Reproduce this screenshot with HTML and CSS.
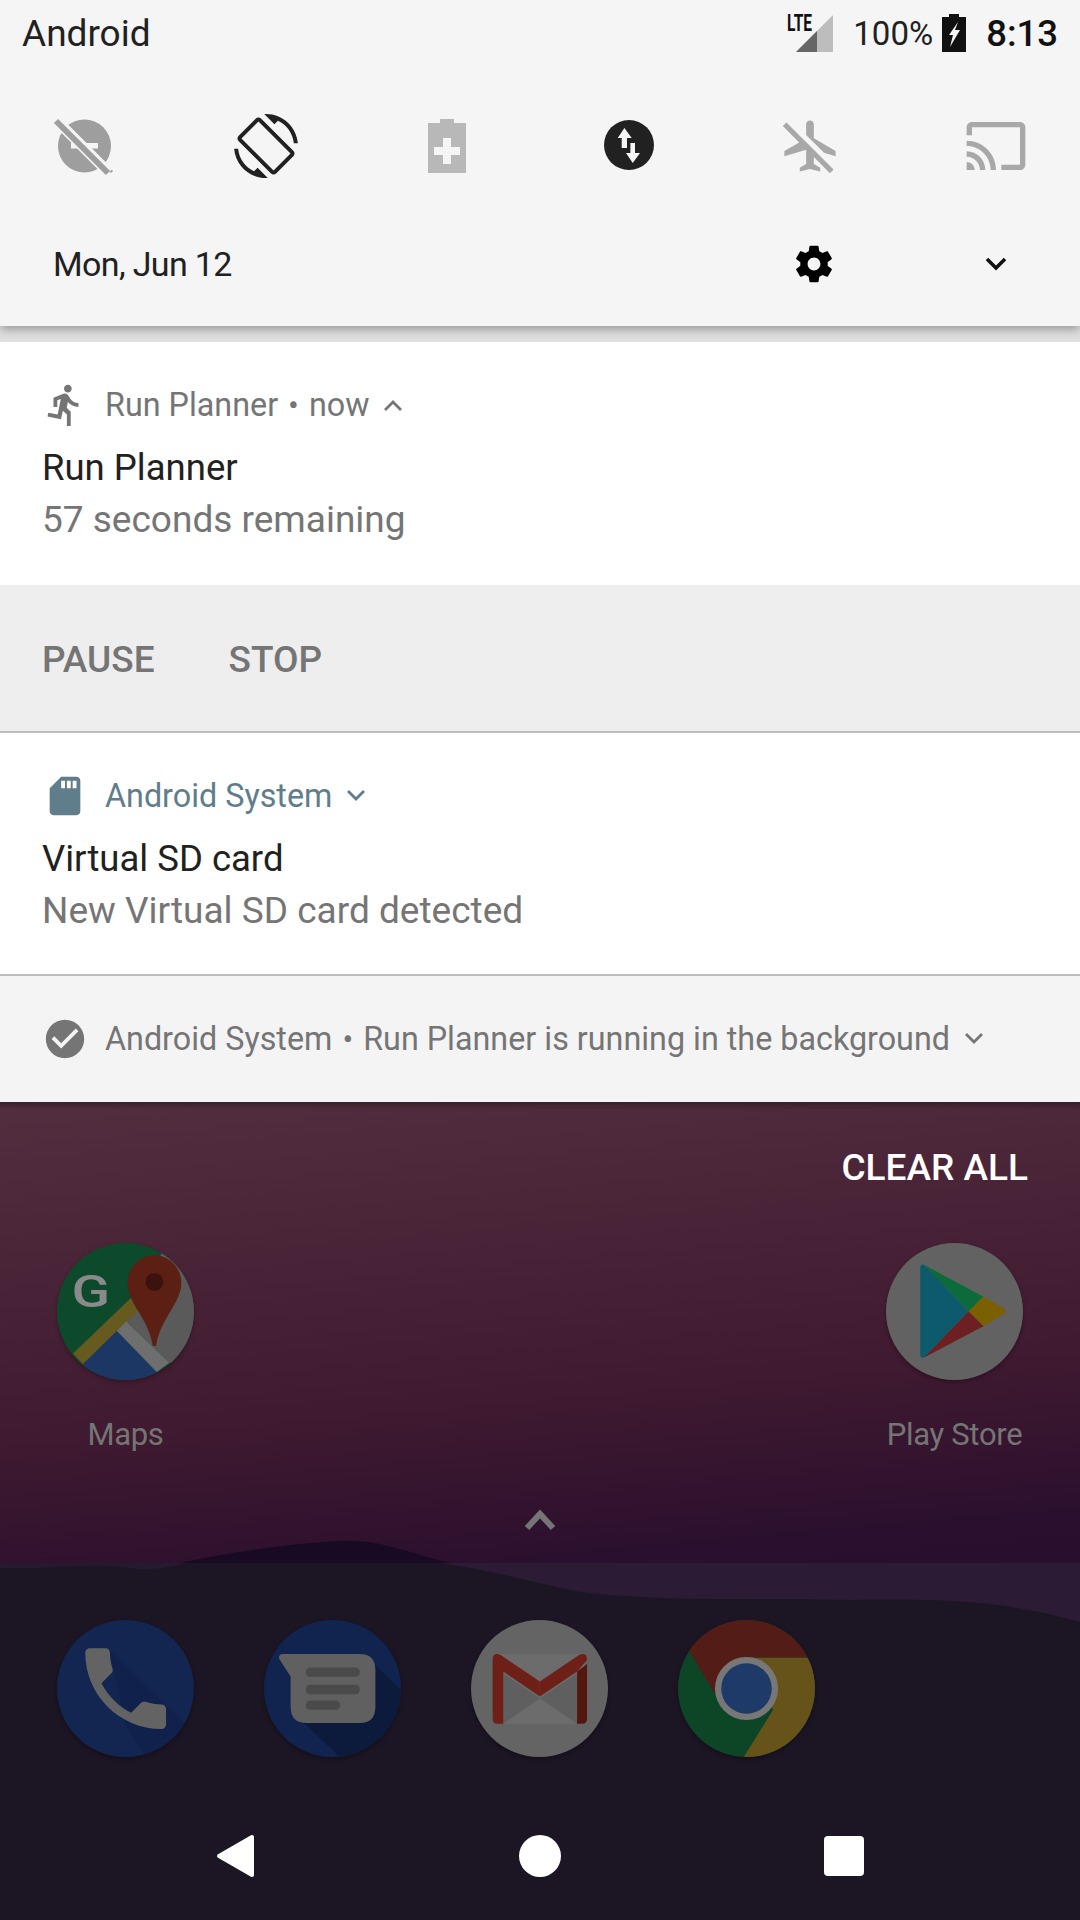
FILE: index.html
```html
<!DOCTYPE html>
<html lang="en">
<head>
    <meta charset="UTF-8">
    <meta name="viewport" content="width=device-width, initial-scale=1.0">
    <title>Notification shade</title>
    <link rel="stylesheet" href="styles.css">
</head>
<body>
    <header class="shade">
        <div class="status-bar">
            <span class="carrier">Android</span>
            <svg class="signal" viewBox="0 -4 50 48">
                <path fill="#bdbdbd" d="M49 2V39H12z"/>
                <path fill="#666" d="M12 39L33 18V39z"/>
                <text class="lte" x="3" y="18" textLength="25" lengthAdjust="spacingAndGlyphs">LTE</text>
            </svg>
            <span class="battery-text">100%</span>
            <svg class="battery" viewBox="0 0 24 38">
                <path fill="#111" d="M7 0H17V3H24V38H0V3H7z"/>
                <path fill="#f5f5f5" d="M16 8L7 21H11L8 33L18 16H13z"/>
            </svg>
            <span class="clock">8:13</span>
        </div>

        <div class="tiles">
            <svg class="tile" viewBox="0 0 64 64">
                <circle cx="32.500" cy="32" r="26.500" fill="#9e9e9e"/>
                <rect x="19" y="29" width="27" height="5.500" fill="#f5f5f5"/>
                <path d="M8 6L60 58" stroke="#9e9e9e" stroke-width="3"/>
                <path d="M7.500 4L59.500 56" stroke="#f5f5f5" stroke-width="3"/>
                <path d="M4 7L56 59" stroke="#f5f5f5" stroke-width="9"/>
                <path d="M4 7L56 59" stroke="#9e9e9e" stroke-width="6"/>
            </svg>
            <svg class="tile" viewBox="0 0 24 24">
                <path fill="#212121" d="M16.48 2.52c3.27 1.55 5.61 4.72 5.97 8.48h1.5C23.44 4.84 18.29 0 12 0l-.66.03 3.81 3.81 1.33-1.32zm-6.25-.77c-.59-.59-1.54-.59-2.12 0L1.75 8.11c-.59.59-.59 1.54 0 2.12l12.02 12.02c.59.59 1.54.59 2.12 0l6.36-6.36c.59-.59.59-1.54 0-2.12L10.23 1.75zm4.6 19.44L2.81 9.17l6.36-6.36 12.02 12.02-6.36 6.36zm-7.31.29C4.25 19.94 1.91 16.76 1.55 13H.05C.56 19.16 5.71 24 12 24l.66-.03-3.81-3.81-1.33 1.32z"/>
            </svg>
            <svg class="tile" viewBox="0 0 64 64">
                <path fill="#b8b8b8" d="M25 5H39V9H51V59H13V9H25z"/>
                <path fill="#f5f5f5" d="M28 24H36V33H45V41H36V50H28V41H19V33H28z"/>
            </svg>
            <svg class="tile" viewBox="0 0 64 64">
                <circle cx="32" cy="31" r="25" fill="#212121"/>
                <path fill="#f5f5f5" d="M27.400 14L34.700 24H30V34H24.700V24H20.700z"/>
                <path fill="#f5f5f5" d="M33.400 29H38V39H43L35.700 49L29 39H33.400z"/>
            </svg>
            <svg class="tile" viewBox="-0.500 -0.500 25 25">
                <path fill="#a8a8a8" d="M10.500 7.670V3.500c0-.83.67-1.500 1.500-1.500s1.500.67 1.500 1.500V9l8.500 5v2l-4.490-1.320-7.010-7.010zm9.280 14.940l1.410-1.410-7.690-7.700-3.940-3.940-6.750-6.750-1.420 1.410 6.380 6.380L2 14v2l8.500-2.500V19L8 20.500V22l4-1 4 1v-1.500L13.500 19v-2.670l6.280 6.280z"/>
            </svg>
            <svg class="tile" viewBox="0 0 24 24">
                <path fill="#a8a8a8" d="M21 3H3c-1.100 0-2 .9-2 2v3h2V5h18v14h-7v2h7c1.100 0 2-.9 2-2V5c0-1.100-.9-2-2-2zM1 18v3h3c0-1.660-1.340-3-3-3zm0-4v2c2.760 0 5 2.240 5 5h2c0-3.870-3.130-7-7-7zm0-4v2c4.970 0 9 4.030 9 9h2c0-6.080-4.930-11-11-11z"/>
            </svg>
        </div>

        <div class="date-row">
            <span class="date">Mon, Jun 12</span>
            <svg class="gear" viewBox="0 0 24 24">
                <path fill="#000" d="M19.430 12.980c.04-.32.07-.64.07-.98s-.03-.66-.07-.98l2.110-1.650c.19-.15.24-.42.12-.64l-2-3.460c-.12-.22-.39-.3-.61-.22l-2.490 1c-.52-.4-1.080-.73-1.690-.98l-.38-2.650C14.460 2.180 14.250 2 14 2h-4c-.25 0-.46.18-.49.42l-.38 2.650c-.61.25-1.170.59-1.690.98l-2.490-1c-.23-.09-.49 0-.61.22l-2 3.460c-.13.22-.07.49.12.64l2.110 1.650c-.04.32-.07.65-.07.98s.03.66.07.98l-2.110 1.650c-.19.15-.24.42-.12.64l2 3.460c.12.22.39.3.61.22l2.490-1c.52.4 1.080.73 1.690.98l.38 2.650c.03.24.24.42.49.42h4c.25 0 .46-.18.49-.42l.38-2.650c.61-.25 1.170-.59 1.690-.98l2.490 1c.23.09.49 0 .61-.22l2-3.460c.12-.22.07-.49-.12-.64l-2.110-1.650zM12 15.500c-1.930 0-3.500-1.570-3.500-3.500s1.570-3.500 3.500-3.500 3.500 1.570 3.500 3.500-1.570 3.500-3.500 3.500z"/>
            </svg>
            <svg class="expand" viewBox="0 0 24 16">
                <path d="M3 3L12 12L21 3" fill="none" stroke="#111" stroke-width="3.500"/>
            </svg>
        </div>
    </header>

    <main class="list">
        <section class="notif">
            <div class="notif-head">
                <svg class="notif-icon" viewBox="0 0 24 24">
                    <path fill="#757575" d="M13.490 5.480c1.100 0 2-.9 2-2s-.9-2-2-2-2 .9-2 2 .9 2 2 2zm-3.600 13.900l1-4.400 2.100 2v6h2v-7.500l-2.100-2 .6-3c1.300 1.500 3.300 2.500 5.500 2.500v-2c-1.900 0-3.500-1-4.300-2.400l-1-1.600c-.4-.6-1-1-1.700-1-.3 0-.5.1-.8.1l-5.200 2.200v4.700h2v-3.400l1.800-.7-1.600 8.100-4.900-1-.4 2 7 1.400z"/>
                </svg>
                <span>Run Planner</span>
                <span class="dot">•</span>
                <span>now</span>
                <svg class="chev" viewBox="0 0 20 14"><path d="M2 12L10 4L18 12" fill="none" stroke="currentColor" stroke-width="2.800"/></svg>
            </div>
            <div class="notif-title">Run Planner</div>
            <div class="notif-text">57 seconds remaining</div>
        </section>
        <div class="actions">
            <span class="action">PAUSE</span>
            <span class="action">STOP</span>
        </div>

        <section class="notif notif-last">
            <div class="notif-head system">
                <svg class="notif-icon" viewBox="0 0 24 24">
                    <path fill="#607d8b" d="M18 2h-8L4.020 8 4 20c0 1.100.9 2 2 2h12c1.100 0 2-.9 2-2V4c0-1.100-.9-2-2-2zm-6 6h-2V4h2v4zm3 0h-2V4h2v4zm3 0h-2V4h2v4z"/>
                </svg>
                <span>Android System</span>
                <svg class="chev" viewBox="0 0 20 14"><path d="M2 2L10 10L18 2" fill="none" stroke="currentColor" stroke-width="2.800"/></svg>
            </div>
            <div class="notif-title">Virtual SD card</div>
            <div class="notif-text">New Virtual SD card detected</div>
        </section>

        <section class="notif-min">
            <div class="notif-head">
                <svg class="notif-icon" viewBox="0 0 24 24">
                    <path fill="#757575" d="M12 2C6.480 2 2 6.480 2 12s4.480 10 10 10 10-4.480 10-10S17.520 2 12 2zm-2 15l-5-5 1.410-1.410L10 14.170l7.590-7.590L19 8l-9 9z"/>
                </svg>
                <span>Android System</span>
                <span class="dot">•</span>
                <span>Run Planner is running in the background</span>
                <svg class="chev" viewBox="0 0 20 14"><path d="M2 2L10 10L18 2" fill="none" stroke="currentColor" stroke-width="2.800"/></svg>
            </div>
        </section>
    </main>

    <div class="home">
        <svg class="wallpaper" viewBox="0 0 1080 818">
            <path fill="#170a22" d="M180 461C230 450 300 440 345 439C385 438 410 452 450 461z"/>
            <rect y="461" width="1080" height="357" fill="#1c1524"/>
            <path fill="#2b1b35" d="M440 461C500 470 530 480 580 490C660 500 760 496 850 498C950 496 1010 500 1080 520V461z"/>
            <path fill="#261a30" d="M0 466C50 468 90 460 130 466C150 470 170 464 190 461H0z"/>
        </svg>

        <div class="clear-row"><span class="clear-all">CLEAR ALL</span></div>

        <div class="apps">
            <div class="app">
                <svg class="app-icon" viewBox="172 130 412 412">
                    <rect x="172" y="130" width="412" height="412" fill="#0d4a2b"/>
                    <path fill="#5a5a5a" d="M410 335L500 130H600V490H510L380 365z"/>
                    <path fill="#665a1e" d="M395 295L415 335L250 495L220 462z"/>
                    <path fill="#1c3764" d="M352 395L472 518L400 560H300L250 495z"/>
                    <path fill="#6e6e6e" d="M380 365L510 490L472 518L352 395z"/>
                    <path fill="#5c1f13" d="M465 167C420 167 384 205 384 250C384 310 450 360 460 440H470C480 360 546 310 546 250C546 205 510 167 465 167z"/>
                    <circle cx="465" cy="247" r="27" fill="#3b120d"/>
                    <text class="maps-g" x="216" y="322" textLength="116" lengthAdjust="spacingAndGlyphs">G</text>
                </svg>
                <span class="app-label">Maps</span>
            </div>
            <div class="app">
                <svg class="app-icon" viewBox="137 130 412 412">
                    <rect x="137" y="130" width="412" height="412" fill="#626262"/>
                    <path fill="#0b6b3a" d="M250 195L430 292L385 335z"/>
                    <path fill="#7a6000" d="M430 292L490 326Q502 335 490 344L430 380L385 335z"/>
                    <path fill="#6e1f22" d="M385 335L430 380L250 475z"/>
                    <path fill="#0c5a6b" d="M240 205Q240 195 250 195L385 335L250 475Q240 475 240 465z"/>
                </svg>
                <span class="app-label">Play Store</span>
            </div>
        </div>

        <svg class="up-chev" viewBox="0 0 36 24"><path d="M5 21L18 7L31 21" fill="none" stroke="#757575" stroke-width="6"/></svg>

        <div class="dock">
            <svg class="app-icon" viewBox="172 420 412 412">
                <rect x="172" y="420" width="412" height="412" fill="#122651"/>
                <path fill="#10224b" d="M330 510L584 760V832H440L380 740z"/>
                <path fill="#636363" transform="translate(216.500 464.500) scale(13.500)" d="M6.620 10.790c1.440 2.830 3.760 5.140 6.590 6.590l2.200-2.200c.27-.27.67-.36 1.020-.24 1.120.37 2.330.57 3.570.57.55 0 1 .45 1 1V20c0 .55-.45 1-1 1-9.390 0-17-7.610-17-17 0-.55.45-1 1-1h3.500c.55 0 1 .45 1 1 0 1.250.2 2.450.57 3.570.11.35.03.74-.25 1.020l-2.200 2.200z"/>
            </svg>
            <svg class="app-icon" viewBox="792 420 412 412">
                <rect x="792" y="420" width="412" height="412" fill="#10244f"/>
                <path fill="#0c1b3c" d="M1100 530L1204 630V832H1020L880 700z"/>
                <path fill="#606060" d="M850 522H1080Q1127 522 1127 570V680Q1127 730 1080 730H920Q872 730 872 680V590L838 537Q834 522 850 522z"/>
                <rect x="918" y="563" width="162" height="28" rx="13" fill="#4a4a4a"/>
                <rect x="918" y="615" width="162" height="28" rx="13" fill="#4a4a4a"/>
                <rect x="918" y="662" width="103" height="28" rx="13" fill="#4a4a4a"/>
            </svg>
            <svg class="app-icon" viewBox="93 420 412 412">
                <rect x="93" y="420" width="412" height="412" fill="#646464"/>
                <rect x="165" y="522" width="270" height="210" fill="#6c6c6c"/>
                <path fill="#5f5f5f" d="M190 580L300 655L190 732zM412 580L300 655L412 732z"/>
                <path fill="#6e2018" d="M158 540Q158 515 182 525L300 605V650L190 575V732H172Q158 732 158 716z"/>
                <path fill="#6e2018" d="M442 540Q442 515 418 525L300 605V650L412 575z"/>
                <path fill="#541710" d="M412 575L442 552V716Q442 732 428 732H412z"/>
            </svg>
            <svg class="app-icon" viewBox="714 420 412 412">
                <rect x="714" y="420" width="412" height="412" fill="#0d4527"/>
                <path fill="#66531a" d="M920 533H1126V832H912L1000 690z"/>
                <path fill="#541c17" d="M748 515L714 420H1126V533H920L830 650z"/>
                <circle cx="920" cy="626" r="95" fill="#777"/>
                <circle cx="920" cy="626" r="76" fill="#1d3a68"/>
            </svg>
        </div>

        <nav class="nav-bar">
            <svg class="nav-btn" viewBox="0 0 60 60"><path fill="#fff" d="M13 30L46 11V49z" stroke="#fff" stroke-width="4" stroke-linejoin="round"/></svg>
            <span class="nav-home"></span>
            <span class="nav-recent"></span>
        </nav>
    </div>
</body>
</html>
```

FILE: styles.css
```css
* {
    box-sizing: border-box;
}

html, body {
    margin: 0;
    padding: 0;
}

body {
    width: 1080px;
    height: 1920px;
    overflow: hidden;
    display: flex;
    flex-direction: column;
    background-color: #e0e0e0;
    font-family: Roboto, sans-serif;
}

/* quick settings */
.shade {
    height: 326px;
    margin-bottom: 16px;
    background-color: #f5f5f5;
    box-shadow: 0 3px 10px rgba(0, 0, 0, 0.35);
    position: relative;
}

.status-bar {
    height: 66px;
    display: flex;
    align-items: center;
    padding: 0 22px 0 22px;
    color: #212121;
}

.carrier {
    font-size: 37px;
    margin-right: auto;
}

.signal {
    width: 50px;
    height: 48px;
    margin-right: 19px;
}

.lte {
    font-family: Roboto, sans-serif;
    font-weight: 700;
    font-size: 23px;
    fill: #111;
}

.battery-text {
    font-size: 33px;
    margin-right: 9px;
}

.battery {
    width: 24px;
    height: 38px;
    margin-right: 20px;
}

.clock {
    font-size: 36.500px;
    font-weight: 500;
    color: #111;
}

.tiles {
    height: 160px;
    padding: 0 52px;
    display: flex;
    gap: 117.600px;
    align-items: center;
}

.tile {
    width: 64px;
    height: 64px;
    flex-shrink: 0;
}

.tile:last-child {
    margin-left: auto;
}

.date-row {
    height: 76px;
    display: flex;
    align-items: center;
    padding-left: 53px;
}

.date {
    font-size: 34px;
    letter-spacing: -0.650px;
    color: #212121;
    margin-right: auto;
}

.gear {
    width: 44px;
    height: 44px;
    margin-right: 148px;
}

.expand {
    width: 24px;
    height: 16px;
    margin-right: 72px;
}

/* notifications */
.list {
    display: flex;
    flex-direction: column;
}

.notif {
    height: 243px;
    padding: 41px 0 0 42px;
    background-color: #fff;
}

.notif-last {
    height: 241px;
}

.notif-head {
    height: 44px;
    display: flex;
    align-items: center;
    gap: 10px;
    font-size: 32.300px;
    color: #757575;
    white-space: nowrap;
}

.notif-head.system {
    color: #607d8b;
}

.notif-icon {
    width: 46px;
    height: 46px;
    margin-right: 7px;
    flex-shrink: 0;
}

.dot {
    font-size: 32px;
}

.chev {
    width: 20px;
    height: 14px;
    margin-left: 4px;
}

.notif-title {
    margin-top: 16px;
    height: 50px;
    line-height: 50px;
    font-size: 36.500px;
    color: #212121;
}

.notif-text {
    height: 54px;
    line-height: 54px;
    font-size: 37px;
    color: #757575;
}

.actions {
    height: 148px;
    display: flex;
    align-items: center;
    gap: 74px;
    padding: 2px 0 0 42px;
    background-color: #eeeeee;
    border-bottom: 2px solid #bdbdbd;
}

.action {
    font-size: 37px;
    font-weight: 500;
    color: #757575;
}

.notif-min {
    height: 128px;
    padding: 41px 0 0 42px;
    background-color: #f4f4f4;
    border-top: 2px solid #bdbdbd;
}

/* home screen behind the shade */
.home {
    flex: 1;
    position: relative;
    background: linear-gradient(175deg, #532e3f 0%, #401a30 37%, #2a0f2e 56%, #1f0c28 100%);
}

.home::before {
    content: "";
    position: absolute;
    left: 0;
    right: 0;
    top: 0;
    height: 8px;
    background: linear-gradient(rgba(0, 0, 0, 0.3), rgba(0, 0, 0, 0));
}

.wallpaper {
    position: absolute;
    left: 0;
    top: 0;
    width: 1080px;
    height: 818px;
}

.clear-row, .apps, .up-chev, .dock, .nav-bar {
    position: relative;
}

.clear-row {
    height: 130px;
    display: flex;
    justify-content: flex-end;
    align-items: center;
    padding-right: 52px;
}

.clear-all {
    font-size: 37px;
    font-weight: 500;
    color: #fff;
}

.apps {
    margin-top: 11px;
    padding: 0 57px;
    display: flex;
    justify-content: space-between;
}

.app {
    width: 137px;
    display: flex;
    flex-direction: column;
    align-items: center;
}

.app-icon {
    width: 137px;
    height: 137px;
    flex-shrink: 0;
    border-radius: 50%;
    box-shadow: 0 2px 4px rgba(0, 0, 0, 0.3);
}

.maps-g {
    font-family: Roboto, sans-serif;
    font-weight: 500;
    font-size: 135px;
    fill: #8a8a8a;
}

.app-label {
    margin-top: 35px;
    line-height: 40px;
    font-size: 31px;
    letter-spacing: -0.300px;
    color: #757575;
    white-space: nowrap;
}

.up-chev {
    display: block;
    width: 36px;
    height: 24px;
    margin: 52px auto 0;
}

.dock {
    margin-top: 89px;
    padding-left: 57px;
    display: flex;
    gap: 70px;
}

.nav-bar {
    margin-top: 69px;
    height: 60px;
    display: grid;
    grid-template-columns: repeat(3, 60px);
    justify-content: center;
    column-gap: 244px;
    align-items: center;
    justify-items: center;
}

.nav-btn {
    width: 60px;
    height: 60px;
}

.nav-home {
    width: 42px;
    height: 42px;
    border-radius: 50%;
    background-color: #fff;
}

.nav-recent {
    width: 40px;
    height: 40px;
    border-radius: 4px;
    background-color: #fff;
}
```
